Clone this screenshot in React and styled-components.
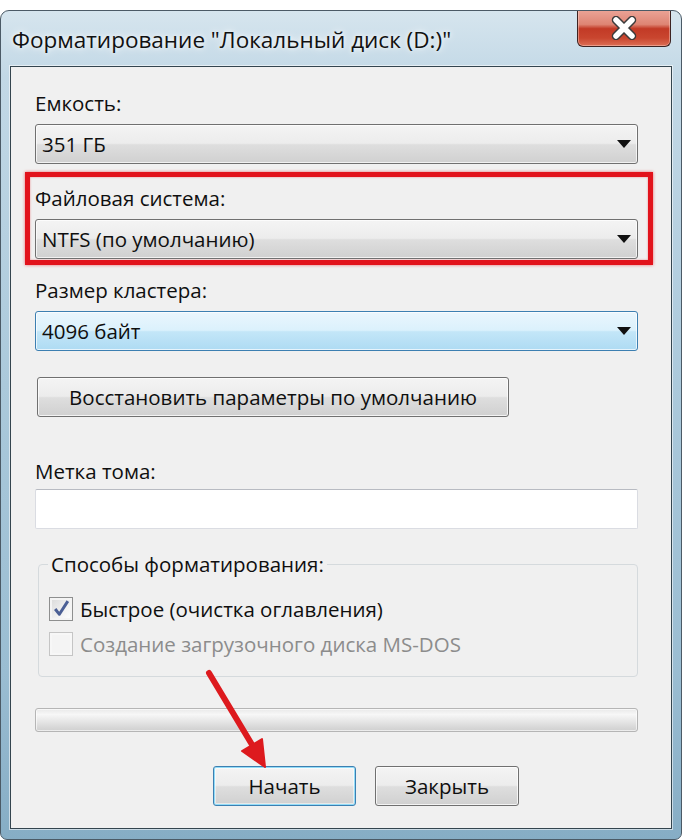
import React from "react";
import styled, { createGlobalStyle } from "styled-components";

const GlobalStyle = createGlobalStyle`
  html, body {
    margin: 0;
    padding: 0;
    background: #ffffff;
  }
  body {
    font-family: "Open Sans", "Noto Sans", sans-serif;
    color: #0f0f0f;
  }
  * {
    box-sizing: border-box;
  }
`;

const Window = styled.div`
  position: relative;
  margin-top: 10px;
  width: 682px;
  height: 830px;
  border: 1px solid #4b5a66;
  border-radius: 9px 9px 7px 7px;
  background: linear-gradient(
    180deg,
    #d6e5ee 0%,
    #c2d8e6 8%,
    #abc9db 45%,
    #9abdd2 80%,
    #86adc5 100%
  );
  padding: 0 9px 10px 9px;
  display: flex;
  flex-direction: column;
  overflow: hidden;
`;

const TitleBar = styled.div`
  height: 55px;
  display: flex;
  align-items: flex-start;
  justify-content: space-between;
`;

const Title = styled.div`
  margin-top: 15px;
  padding-left: 2px;
  font-size: 22.5px;
  line-height: 28px;
  color: #111;
  text-shadow: 0 0 10px rgba(255, 255, 255, 0.95), 0 0 4px rgba(255, 255, 255, 0.8);
  white-space: nowrap;
`;

const CloseButton = styled.div`
  margin-top: -1px;
  margin-right: 1px;
  width: 94px;
  height: 37px;
  border: 1px solid #3d2322;
  border-top: none;
  border-radius: 0 0 6px 6px;
  background: linear-gradient(
    180deg,
    #eba497 0%,
    #de8574 40%,
    #c23a26 52%,
    #c9462f 78%,
    #dc6e55 100%
  );
  box-shadow: inset 0 0 0 1px rgba(255, 215, 205, 0.45);
  display: flex;
  align-items: center;
  justify-content: center;
`;

const Client = styled.div`
  flex: 1;
  background: #f0f0f0;
  border: 1px solid #34454f;
  box-shadow: 0 0 0 1px rgba(255, 255, 255, 0.55);
  padding: 24px 33px 0 24px;
  display: flex;
  flex-direction: column;
`;

const Label = styled.div`
  height: 24px;
  font-size: 20.5px;
  line-height: 24px;
  margin-top: ${({ $top }) => $top || 0}px;
  white-space: nowrap;
`;

const Combo = styled.div`
  margin-top: 9px;
  height: 40px;
  border: 1px solid ${({ $focused }) => ($focused ? "#3c7fb1" : "#707070")};
  border-radius: 3px;
  background: ${({ $focused }) =>
    $focused
      ? "linear-gradient(180deg, #eaf6fd 0%, #dbf1fc 48%, #c3e6f8 52%, #aedbf3 100%)"
      : "linear-gradient(180deg, #f4f4f4 0%, #ececec 48%, #dedede 52%, #d0d0d0 100%)"};
  box-shadow: inset 0 0 0 1px rgba(255, 255, 255, 0.7);
  display: flex;
  align-items: center;
  justify-content: space-between;
  padding: 0 6px 0 6px;
  font-size: 20.5px;
`;

const Arrow = styled.span`
  width: 0;
  height: 0;
  border-left: 7px solid transparent;
  border-right: 7px solid transparent;
  border-top: 8px solid #101010;
`;

const Highlight = styled.div`
  margin: 8px -15px 0 -10px;
  padding: 9px 10px 1px 5px;
  border: 5px solid #e2131c;
  box-shadow: 0 0 3px rgba(226, 19, 28, 0.6), inset 0 0 2px rgba(226, 19, 28, 0.5);
`;

const PushButton = styled.div`
  height: 40px;
  width: ${({ $w }) => $w}px;
  border: 1px solid ${({ $default }) => ($default ? "#3c7fb1" : "#707070")};
  border-radius: 3px;
  background: linear-gradient(180deg, #f4f4f4 0%, #ececec 48%, #dedede 52%, #d0d0d0 100%);
  box-shadow: ${({ $default }) =>
    $default
      ? "inset 0 0 0 1px #92dcf8, inset 0 0 0 2px rgba(255,255,255,0.5)"
      : "inset 0 0 0 1px rgba(255, 255, 255, 0.75)"};
  display: flex;
  align-items: center;
  justify-content: center;
  font-size: 20.5px;
  color: #0f0f0f;
`;

const RestoreRow = styled.div`
  margin-top: 26px;
  margin-left: 2px;
`;

const TextBox = styled.div`
  margin-top: 6px;
  height: 40px;
  background: #ffffff;
  border: 1px solid #dadce2;
  border-top-color: #b8bbc2;
  border-radius: 2px;
`;

const Group = styled.fieldset`
  margin: 23px 0 0 3px;
  padding: 0 9px 15px 9px;
  border: 1px solid #d5dadd;
  border-radius: 4px;
  min-width: 0;
`;

const Legend = styled.legend`
  padding: 0 3px;
  font-size: 20.5px;
  line-height: 24px;
  margin-bottom: 15px;
`;

const CheckRow = styled.div`
  height: 35px;
  display: flex;
  align-items: center;
  gap: 7px;
  padding-left: 1px;
  font-size: 20.5px;
  color: ${({ $disabled }) => ($disabled ? "#8c8c8c" : "#0f0f0f")};
  white-space: nowrap;
`;

const Box = styled.span`
  width: 24px;
  height: 24px;
  flex: none;
  border: 1px solid ${({ $disabled }) => ($disabled ? "#c5c5c5" : "#8e8f8f")};
  background: ${({ $disabled }) =>
    $disabled ? "#f4f4f4" : "linear-gradient(135deg, #d9d9d9 0%, #f2f2f2 60%, #ffffff 100%)"};
  box-shadow: inset 0 0 0 2px ${({ $disabled }) => ($disabled ? "#f7f7f7" : "#f4f4f4")};
  display: flex;
  align-items: center;
  justify-content: center;
`;

const Progress = styled.div`
  margin-top: 31px;
  height: 24px;
  border: 1px solid #b5b5b5;
  border-radius: 3px;
  background: linear-gradient(180deg, #e9e9e9 0%, #f7f7f7 25%, #e4e4e4 60%, #cfcfcf 100%);
  box-shadow: inset 0 0 0 1px rgba(255, 255, 255, 0.6);
`;

const ButtonRow = styled.div`
  margin-top: 34px;
  padding-left: 178px;
  display: flex;
  gap: 19px;
`;

const Annotation = styled.svg`
  position: absolute;
  left: -1px;
  top: -11px;
  width: 682px;
  height: 840px;
  pointer-events: none;
`;

const CloseGlyph = () => (
  <svg width="28" height="24" viewBox="0 0 28 24">
    <path d="M6 4 L22 20 M22 4 L6 20" stroke="#3b3b3b" strokeWidth="8.5" strokeLinecap="round" />
    <path d="M6 4 L22 20 M22 4 L6 20" stroke="#ffffff" strokeWidth="5.5" strokeLinecap="round" />
  </svg>
);

const CheckMark = () => (
  <svg width="19" height="19" viewBox="0 0 18 18">
    <path d="M3 9.5 L7 14.5 L15 2" fill="none" stroke="#4b5f95" strokeWidth="2.8" strokeLinejoin="round" />
  </svg>
);

const App = () => {
  return (
    <>
      <GlobalStyle />
      <Window>
        <TitleBar>
          <Title>Форматирование "Локальный диск (D:)"</Title>
          <CloseButton>
            <CloseGlyph />
          </CloseButton>
        </TitleBar>
        <Client>
          <Label>Емкость:</Label>
          <Combo>
            <span>351 ГБ</span>
            <Arrow />
          </Combo>

          <Highlight>
            <Label>Файловая система:</Label>
            <Combo>
              <span>NTFS (по умолчанию)</span>
              <Arrow />
            </Combo>
          </Highlight>

          <Label $top={13}>Размер кластера:</Label>
          <Combo $focused>
            <span>4096 байт</span>
            <Arrow />
          </Combo>

          <RestoreRow>
            <PushButton $w={472}>Восстановить параметры по умолчанию</PushButton>
          </RestoreRow>

          <Label $top={42}>Метка тома:</Label>
          <TextBox />

          <Group>
            <Legend>Способы форматирования:</Legend>
            <CheckRow>
              <Box>
                <CheckMark />
              </Box>
              Быстрое (очистка оглавления)
            </CheckRow>
            <CheckRow $disabled>
              <Box $disabled />
              Создание загрузочного диска MS-DOS
            </CheckRow>
          </Group>

          <Progress />

          <ButtonRow>
            <PushButton $w={143} $default>
              Начать
            </PushButton>
            <PushButton $w={144}>Закрыть</PushButton>
          </ButtonRow>
        </Client>
        <Annotation viewBox="0 0 682 840">
          <line x1="209" y1="673" x2="254" y2="748" stroke="#dd1a1e" strokeWidth="6" strokeLinecap="round" />
          <polygon points="265,767 242,751 262,739" fill="#dd1a1e" stroke="#dd1a1e" strokeWidth="2" strokeLinejoin="round" />
        </Annotation>
      </Window>
    </>
  );
};

export default App;
